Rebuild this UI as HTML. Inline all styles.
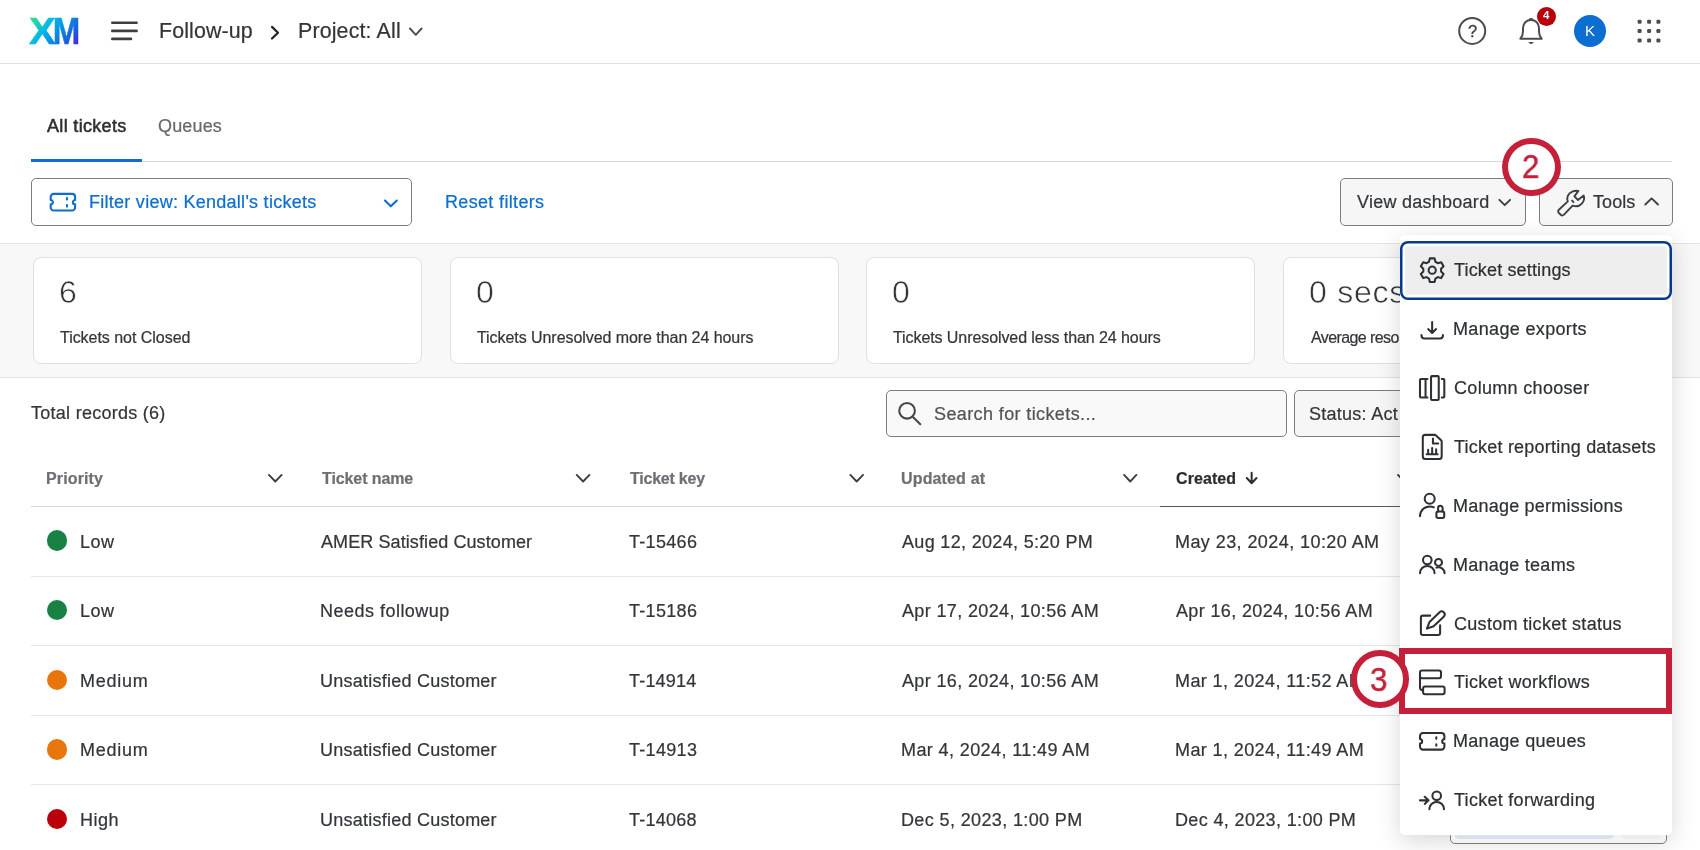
<!DOCTYPE html>
<html lang="en">
<head>
<meta charset="utf-8">
<title>Follow-up</title>
<style>
*{box-sizing:border-box;margin:0;padding:0}
html,body{width:1700px;height:850px;overflow:hidden;background:#fff}
body{position:relative;font-family:"Liberation Sans",sans-serif;color:#32363a}
.a{position:absolute;white-space:nowrap}
.t{position:absolute;white-space:nowrap;line-height:1;transform:translateY(-50%);will-change:transform;-webkit-text-stroke:.22px}
svg{position:absolute;overflow:visible}
#hdr{left:0;top:0;width:1700px;height:64px;border-bottom:1px solid #e4e4e4;background:#fff}
#tabline{left:31px;top:161px;width:1641px;height:1px;background:#dadada}
#tabsel{left:31px;top:159px;width:111px;height:3px;background:#0b6ed0}
.btn{border:1px solid #7d7d7d;border-radius:5px;background:#fff}
.btn2{border:1px solid #7d7d7d;border-radius:5px;background:#f6f6f6}
#band{left:0;top:243px;width:1700px;height:135px;background:#f8f8f8;border-top:1px solid #e4e4e4;border-bottom:1px solid #e4e4e4}
.card{background:#fff;border:1px solid #e0e0e0;border-radius:8px;height:107px;top:257px;width:389px}
.rl{left:31px;width:1641px;height:1px;background:#e6e6e6}
.dot{width:20.6px;height:20.6px;border-radius:50%;left:46.700px}
#menu{left:1399.500px;top:235px;width:272.500px;height:600.200px;background:#fff;border-radius:5px;box-shadow:0 6px 24px rgba(0,0,0,.16)}
.ic{fill:none;stroke:#32363a;stroke-width:1.9;stroke-linecap:round;stroke-linejoin:round}
.chev{fill:none;stroke:#4a4e52;stroke-width:1.9;stroke-linecap:round;stroke-linejoin:round}
</style>
</head>
<body>

<!-- header -->
<div class="a" id="hdr"></div>
<svg style="left:0;top:0;will-change:transform" width="100" height="64">
  <defs><linearGradient id="xmg" gradientUnits="userSpaceOnUse" x1="31" y1="15" x2="74" y2="50">
    <stop offset="0" stop-color="#27e389"/><stop offset=".16" stop-color="#1fd6a4"/><stop offset=".36" stop-color="#05b6ea"/><stop offset=".62" stop-color="#0a86e2"/><stop offset=".82" stop-color="#1d58e0"/><stop offset="1" stop-color="#5a1ee6"/>
  </linearGradient></defs>
  <g font-family="Liberation Sans, sans-serif" font-weight="bold" font-size="37.500" fill="url(#xmg)" stroke="url(#xmg)" stroke-width=".5">
    <text x="29.100" y="43.800" textLength="26.650" lengthAdjust="spacingAndGlyphs">X</text>
    <text x="52.800" y="43.800" textLength="27.470" lengthAdjust="spacingAndGlyphs">M</text>
  </g>
</svg>
<svg style="left:111px;top:21px" width="28" height="20" fill="none" stroke="#3c4043" stroke-width="2.6" stroke-linecap="round">
  <path d="M1.3 1.8H25.6M1.3 9.9H25.6M1.3 17.9H20"/>
</svg>
<svg style="left:269px;top:24px" width="12" height="18" fill="none" stroke="#1f2326" stroke-width="2.2" stroke-linecap="round" stroke-linejoin="round"><path d="M3 2.9L9 8.700L3 14.500"/></svg>
<svg class="chev" style="left:409px;top:26px" width="16" height="12"><path d="M1 2.500L6.800 8.800L12.600 2.500"/></svg>

<svg style="left:1456px;top:15px" width="32" height="32" fill="none" stroke="#494d51" stroke-width="2">
  <circle cx="16.200" cy="15.900" r="13"/>
</svg>
<div class="t" style="left:1468.100px;top:31.200px;font-size:16.500px;color:#3c4044;-webkit-text-stroke:.3px #3c4044">?</div>
<svg style="left:1516px;top:15px" width="30" height="32" fill="none" stroke="#494d51" stroke-width="2" stroke-linecap="round" stroke-linejoin="round">
  <path d="M4.300 23.800C6.200 21.500 7 19.500 7 16.500V13C7 8.200 10.400 5 15 5C19.600 5 23 8.200 23 13V16.500C23 19.500 23.800 21.500 25.700 23.800Z"/>
  <path d="M13.500 4.500C13.800 3.400 16.200 3.400 16.500 4.500" stroke-width="1.600"/>
  <path d="M12.400 27.100H17.700C17.200 29.500 12.900 29.500 12.400 27.100Z" fill="#494d51" stroke="none"/>
</svg>
<div class="a" style="left:1536.600px;top:6.700px;width:19px;height:19px;border-radius:50%;background:#b8000b"></div>
<div class="t" style="left:1542.700px;top:16.300px;font-size:11.500px;font-weight:bold;color:#fff;-webkit-text-stroke:0">4</div>
<div class="a" style="left:1574px;top:14.800px;width:32px;height:32px;border-radius:50%;background:#0b6ed0"></div>
<div class="t" style="left:1585px;top:30.300px;font-size:15px;color:#fff;-webkit-text-stroke:0">K</div>
<svg style="left:1636px;top:18px" width="26" height="26" fill="#494d51">
  <rect x="1.600" y="1.700" width="4" height="4" rx="1.200"/><rect x="11.100" y="1.700" width="4" height="4" rx="1.200"/><rect x="20.400" y="1.700" width="4" height="4" rx="1.200"/>
  <rect x="1.600" y="11" width="4" height="4" rx="1.200"/><rect x="11.100" y="11" width="4" height="4" rx="1.200"/><rect x="20.400" y="11" width="4" height="4" rx="1.200"/>
  <rect x="1.600" y="20.400" width="4" height="4" rx="1.200"/><rect x="11.100" y="20.400" width="4" height="4" rx="1.200"/><rect x="20.400" y="20.400" width="4" height="4" rx="1.200"/>
</svg>

<!-- tabs -->
<div class="a" id="tabline"></div>
<div class="a" id="tabsel"></div>

<!-- toolbar -->
<div class="a btn" style="left:31px;top:178px;width:381px;height:48px"></div>
<div class="a btn2" style="left:1340px;top:178px;width:185.500px;height:48px"></div>
<div class="a btn2" style="left:1539px;top:178px;width:133.500px;height:48px"></div>

<!-- band -->
<div class="a" id="band"></div>
<div class="a card" style="left:33px"></div>
<div class="a card" style="left:449.500px"></div>
<div class="a card" style="left:866px"></div>
<div class="a card" style="left:1282.500px"></div>

<!-- table toolbar -->
<div class="a btn" style="left:885.500px;top:390px;width:401px;height:47px;background:#f9f9f9"></div>
<div class="a btn2" style="left:1294px;top:390px;width:200px;height:47px"></div>

<!-- table lines -->
<div class="a rl" style="top:506px;background:#d6d6d6"></div>
<div class="a" style="left:1160px;top:506px;width:274px;height:1px;background:#55595d"></div>
<div class="a rl" style="top:576px"></div>
<div class="a rl" style="top:645px"></div>
<div class="a rl" style="top:715px"></div>
<div class="a rl" style="top:784px"></div>
<div class="a dot" style="top:530.400px;background:#178244"></div>
<div class="a dot" style="top:599.900px;background:#178244"></div>
<div class="a dot" style="top:669.700px;background:#e8760c"></div>
<div class="a dot" style="top:739.200px;background:#e8760c"></div>
<div class="a dot" style="top:808.700px;background:#bb000b"></div>


<!-- page icons -->
<svg style="left:0;top:0" width="1700" height="850" viewBox="0 0 1700 850" fill="none" stroke-linecap="round" stroke-linejoin="round">
  <g stroke="#0b6ed0" stroke-width="2.1">
    <path transform="translate(50.700 193.900)" d="M3 0H21.400a3 3 0 0 1 3 3V6.100a2.200 2.200 0 0 0 0 4.400V13.600a3 3 0 0 1 -3 3H3a3 3 0 0 1 -3 -3V10.500a2.200 2.200 0 0 0 0 -4.400V3a3 3 0 0 1 3 -3ZM16.300 4.200V5.700M16.300 11.200V12.700"/>
    <path d="M384.900 200.500L390.850 206.300L396.800 200.500"/>
  </g>
  <g stroke="#3c4044" stroke-width="1.9">
    <path d="M1499.400 199.800L1504.750 205.200L1510.100 199.800"/>
    <path d="M1645.300 204.500L1651.650 198.400L1658 204.500"/>
    <path d="M1578.400 190.900C1574.500 190.200 1569.500 191.800 1567.800 195.800C1567 197.800 1567.100 199.600 1567.800 201.400L1558.900 209.700C1557.900 210.700 1557.900 212 1558.900 213L1560.700 214.700C1561.700 215.600 1563 215.600 1564 214.600L1572.600 205.600C1575.500 206.700 1579.500 206.200 1581.800 203.600C1583.900 201.300 1584.600 198.400 1583.700 195.600L1578 200L1574.400 196.400Z"/>
    <path d="M1572.100 200.600L1573.500 202.100"/>
    <path d="M268.950 474.900L275.300 481.500L281.650 474.900M576.750 474.900L583.100 481.500L589.450 474.900M850.350 474.900L856.700 481.500L863.050 474.900M1124.100 474.900L1130.250 481.500L1136.400 474.900M1398 474.900L1404.300 481.500L1410.600 474.900"/>
  </g>
  <g stroke="#44484c" stroke-width="2.050">
    <circle cx="907.050" cy="410.750" r="7.850"/>
    <path d="M912.900 417L920.300 424.200"/>
  </g>
  <g stroke="#2a2e32" stroke-width="2">
    <path d="M1251.650 472.800V483.200M1246.800 478L1251.650 483.200L1256.500 478"/>
  </g>
</svg>
<div class="t" id="h1" style="left:158.70px;top:31.60px;font-size:21.4px;letter-spacing:0.113px">Follow-up</div>
<div class="t" id="h2" style="left:298.00px;top:31.60px;font-size:21.4px;letter-spacing:0.146px">Project: All</div>
<div class="t" id="tab1" style="left:46.77px;top:125.60px;font-size:18px;color:#2d3135;-webkit-text-stroke:0.55px #2d3135;letter-spacing:0.327px">All tickets</div>
<div class="t" id="tab2" style="left:158.22px;top:125.60px;font-size:18px;color:#65696d;letter-spacing:0.153px">Queues</div>
<div class="t" id="fv" style="left:89.30px;top:201.60px;font-size:18px;color:#0b6ed0;letter-spacing:0.266px">Filter view: Kendall's tickets</div>
<div class="t" id="rf" style="left:445.39px;top:201.60px;font-size:18px;color:#0b6ed0;letter-spacing:0.337px">Reset filters</div>
<div class="t" id="vd" style="left:1356.73px;top:201.70px;font-size:18px;letter-spacing:0.260px">View dashboard</div>
<div class="t" id="tl" style="left:1593.42px;top:201.70px;font-size:18px;letter-spacing:0.069px">Tools</div>
<div class="t" id="n1" style="left:58.69px;top:292.30px;font-size:32px;-webkit-text-stroke:.55px #fff">6</div>
<div class="t" id="l1" style="left:60.38px;top:338.10px;font-size:16px;letter-spacing:-0.037px">Tickets not Closed</div>
<div class="t" id="n2" style="left:475.67px;top:292.30px;font-size:32px;-webkit-text-stroke:.55px #fff">0</div>
<div class="t" id="l2" style="left:477.09px;top:338.10px;font-size:16px;letter-spacing:-0.061px">Tickets Unresolved more than 24 hours</div>
<div class="t" id="n3" style="left:892.47px;top:292.30px;font-size:32px;-webkit-text-stroke:.55px #fff">0</div>
<div class="t" id="l3" style="left:893.13px;top:338.10px;font-size:16px;letter-spacing:-0.082px">Tickets Unresolved less than 24 hours</div>
<div class="t" id="n4" style="left:1309.32px;top:292.30px;font-size:32px;-webkit-text-stroke:.55px #fff;letter-spacing:0.768px">0 secs</div>
<div class="t" id="l4" style="left:1310.74px;top:338.10px;font-size:16px;letter-spacing:-0.589px">Average reso<span style="margin-left:5px">lution time</span></div>
<div class="t" id="tr" style="left:31.42px;top:413.00px;font-size:18px;letter-spacing:0.268px">Total records (6)</div>
<div class="t" id="sr" style="left:934.10px;top:413.70px;font-size:18px;color:#505458;letter-spacing:0.387px">Search for tickets...</div>
<div class="t" id="st" style="left:1309.45px;top:413.70px;font-size:18px;letter-spacing:0.261px">Status: Act<span style="margin-left:5px">ive</span></div>
<div class="t" id="c1" style="left:46.27px;top:478.50px;font-size:16px;font-weight:bold;color:#6c7074;letter-spacing:0.127px">Priority</div>
<div class="t" id="c2" style="left:321.53px;top:478.50px;font-size:16px;font-weight:bold;color:#6c7074;letter-spacing:-0.096px">Ticket name</div>
<div class="t" id="c3" style="left:629.53px;top:478.50px;font-size:16px;font-weight:bold;color:#6c7074;letter-spacing:-0.218px">Ticket key</div>
<div class="t" id="c4" style="left:901.20px;top:478.50px;font-size:16px;font-weight:bold;color:#6c7074;letter-spacing:0.149px">Updated at</div>
<div class="t" id="c5" style="left:1176.07px;top:478.50px;font-size:16px;font-weight:bold;color:#2a2e32;letter-spacing:0.090px">Created</div>
<div class="t" id="p0" style="left:79.95px;top:542.30px;font-size:18px;letter-spacing:0.545px">Low</div>
<div class="t" id="n_0" style="left:320.64px;top:542.30px;font-size:18px;letter-spacing:0.092px">AMER Satisfied Customer</div>
<div class="t" id="k0" style="left:628.53px;top:542.30px;font-size:18px;letter-spacing:0.309px">T-15466</div>
<div class="t" id="u0" style="left:901.84px;top:542.30px;font-size:18px;letter-spacing:0.329px">Aug 12, 2024, 5:20 PM</div>
<div class="t" id="cr0" style="left:1174.95px;top:542.30px;font-size:18px;letter-spacing:0.426px">May 23, 2024, 10:20 AM</div>
<div class="t" id="p1" style="left:79.95px;top:611.30px;font-size:18px;letter-spacing:0.545px">Low</div>
<div class="t" id="n_1" style="left:319.90px;top:611.30px;font-size:18px;letter-spacing:0.483px">Needs followup</div>
<div class="t" id="k1" style="left:628.53px;top:611.30px;font-size:18px;letter-spacing:0.309px">T-15186</div>
<div class="t" id="u1" style="left:901.84px;top:611.30px;font-size:18px;letter-spacing:0.360px">Apr 17, 2024, 10:56 AM</div>
<div class="t" id="cr1" style="left:1175.64px;top:611.30px;font-size:18px;letter-spacing:0.357px">Apr 16, 2024, 10:56 AM</div>
<div class="t" id="p2" style="left:79.95px;top:680.50px;font-size:18px;letter-spacing:0.731px">Medium</div>
<div class="t" id="n_2" style="left:320.38px;top:680.50px;font-size:18px;letter-spacing:0.239px">Unsatisfied Customer</div>
<div class="t" id="k2" style="left:628.53px;top:680.50px;font-size:18px;letter-spacing:0.205px">T-14914</div>
<div class="t" id="u2" style="left:901.84px;top:680.50px;font-size:18px;letter-spacing:0.360px">Apr 16, 2024, 10:56 AM</div>
<div class="t" id="cr2" style="left:1175.19px;top:680.50px;font-size:18px;letter-spacing:0.394px">Mar 1, 2024, 11:52 AM</div>
<div class="t" id="p3" style="left:79.95px;top:750.00px;font-size:18px;letter-spacing:0.731px">Medium</div>
<div class="t" id="n_3" style="left:320.38px;top:750.00px;font-size:18px;letter-spacing:0.239px">Unsatisfied Customer</div>
<div class="t" id="k3" style="left:628.53px;top:750.00px;font-size:18px;letter-spacing:0.310px">T-14913</div>
<div class="t" id="u3" style="left:901.39px;top:750.00px;font-size:18px;letter-spacing:0.396px">Mar 4, 2024, 11:49 AM</div>
<div class="t" id="cr3" style="left:1175.19px;top:750.00px;font-size:18px;letter-spacing:0.394px">Mar 1, 2024, 11:49 AM</div>
<div class="t" id="p4" style="left:79.95px;top:819.50px;font-size:18px;letter-spacing:0.522px">High</div>
<div class="t" id="n_4" style="left:320.38px;top:819.50px;font-size:18px;letter-spacing:0.239px">Unsatisfied Customer</div>
<div class="t" id="k4" style="left:628.53px;top:819.50px;font-size:18px;letter-spacing:0.260px">T-14068</div>
<div class="t" id="u4" style="left:901.39px;top:819.50px;font-size:18px;letter-spacing:0.374px">Dec 5, 2023, 1:00 PM</div>
<div class="t" id="cr4" style="left:1175.19px;top:819.50px;font-size:18px;letter-spacing:0.356px">Dec 4, 2023, 1:00 PM</div>

<!-- tools menu -->
<div class="a" id="menu"></div>
<div class="a" style="left:1400px;top:241px;width:271.800px;height:58.700px;border-radius:8px;background:#eee;box-shadow:inset 0 0 0 2.500px #063a8c,inset 0 0 0 5.200px #fff"></div>


<!-- menu icons -->
<svg style="left:0;top:0" width="1700" height="850" viewBox="0 0 1700 850" fill="none" stroke="#2d3135" stroke-width="2.050" stroke-linecap="round" stroke-linejoin="round">
  <path d="M1428.97 261.75 L1429.81 258.39 L1434.59 258.39 L1435.43 261.75 L1437.86 263.16 L1441.19 262.20 L1443.58 266.34 L1441.09 268.74 L1441.09 271.56 L1443.58 273.96 L1441.19 278.10 L1437.86 277.14 L1435.43 278.55 L1434.59 281.91 L1429.81 281.91 L1428.97 278.55 L1426.54 277.14 L1423.21 278.10 L1420.82 273.96 L1423.31 271.56 L1423.31 268.74 L1420.82 266.34 L1423.21 262.20 L1426.54 263.16Z"/>
  <circle cx="1432.200" cy="270.150" r="3.600"/>
  <path d="M1432.150 322V332.600M1428.200 329.100L1432.150 332.900L1436.100 329.100M1421.450 335V335.500a3 3 0 0 0 3 3H1439.950a3 3 0 0 0 3 -3V335"/>
  <path d="M1427.500 378.900H1420.900a.9 .9 0 0 0 -.9 .9V396.500a.9 .9 0 0 0 .9 .9H1427.500M1425.550 378.900V397.400M1441.800 378.900H1443.400a.9 .9 0 0 1 .9 .9V396.500a.9 .9 0 0 1 -.9 .9H1441.800"/>
  <rect x="1431.050" y="376.100" width="7.700" height="23.800" rx=".9"/>
  <path d="M1425.300 434.850H1434.600a2 2 0 0 1 1.400 .6L1441.100 440.300a2 2 0 0 1 .6 1.400V456.400a2.500 2.500 0 0 1 -2.500 2.500H1425.300a2.500 2.500 0 0 1 -2.500 -2.500V437.350a2.500 2.500 0 0 1 2.500 -2.500ZM1432.950 438.500V443.500H1438.200M1426.600 454.300H1437.600M1428.150 454.300V449.800M1432.150 454.300V448M1436.150 454.300V449.200"/>
  <circle cx="1429.700" cy="498.800" r="5"/>
  <path d="M1420 516.200C1420 510.700 1424.300 506.400 1429.700 506.400C1431.200 506.400 1432.600 506.700 1433.800 507.300"/>
  <rect x="1436.400" y="511.500" width="7.800" height="6.400" rx="1.700"/>
  <path d="M1438.100 511.500V508.100a2.260 2.260 0 0 1 4.520 0V511.500"/>
  <circle cx="1427.300" cy="559.950" r="4.300"/>
  <path d="M1420 573.200a7.280 7.280 0 0 1 14.560 0"/>
  <circle cx="1438.500" cy="562.400" r="3.500"/>
  <path d="M1436.400 567.600A6.100 6.100 0 0 1 1444.600 573.300"/>
  <path d="M1430.200 615.600H1422.900a2 2 0 0 0 -2 2V632.900a2 2 0 0 0 2 2H1438.100a2 2 0 0 0 2 -2V625.300"/>
  <path d="M1426.950 628.650L1429.500 621.900L1439.600 612.200A3.050 3.050 0 0 1 1444 616.400L1433.600 626.300Z"/>
  <rect x="1420" y="670.450" width="21" height="7.800" rx="2"/>
  <path d="M1420 676V687.700a2.500 2.500 0 0 0 2.500 2.500"/>
  <rect x="1423.100" y="686.500" width="21.500" height="7.750" rx="2"/>
  <path transform="translate(1420 733)" d="M3 0H21.400a3 3 0 0 1 3 3V6.100a2.200 2.200 0 0 0 0 4.400V13.600a3 3 0 0 1 -3 3H3a3 3 0 0 1 -3 -3V10.500a2.200 2.200 0 0 0 0 -4.400V3a3 3 0 0 1 3 -3ZM16.300 4.200V5.700M16.300 11.200V12.700"/>
  <path d="M1419.900 800.350H1428.300M1424.700 796.800L1428.500 800.350L1424.700 803.900"/>
  <circle cx="1436.700" cy="795.850" r="4.300"/>
  <path d="M1429.400 809.200a7.300 7.300 0 0 1 14.600 0"/>
</svg>
<div class="t" id="m0" style="left:1454.16px;top:270.30px;font-size:18px;color:#2d3135;letter-spacing:0.159px">Ticket settings</div>
<div class="t" id="m1" style="left:1452.75px;top:329.40px;font-size:18px;color:#2d3135;letter-spacing:0.343px">Manage exports</div>
<div class="t" id="m2" style="left:1453.60px;top:387.60px;font-size:18px;color:#2d3135;letter-spacing:0.317px">Column chooser</div>
<div class="t" id="m3" style="left:1454.16px;top:446.50px;font-size:18px;color:#2d3135;letter-spacing:0.221px">Ticket reporting datasets</div>
<div class="t" id="m4" style="left:1452.75px;top:506.40px;font-size:18px;color:#2d3135;letter-spacing:0.220px">Manage permissions</div>
<div class="t" id="m5" style="left:1452.75px;top:564.60px;font-size:18px;color:#2d3135;letter-spacing:0.256px">Manage teams</div>
<div class="t" id="m6" style="left:1453.60px;top:623.70px;font-size:18px;color:#2d3135;letter-spacing:0.289px">Custom ticket status</div>
<div class="t" id="m7" style="left:1454.16px;top:682.40px;font-size:18px;color:#2d3135;letter-spacing:0.301px">Ticket workflows</div>
<div class="t" id="m8" style="left:1452.75px;top:741.00px;font-size:18px;color:#2d3135;letter-spacing:0.299px">Manage queues</div>
<div class="t" id="m9" style="left:1454.16px;top:799.60px;font-size:18px;color:#2d3135;letter-spacing:0.285px">Ticket forwarding</div>

<!-- peeking widget below menu -->
<div class="a" style="left:1450px;top:800px;width:217px;height:44px;border:1px solid #787878;border-radius:5px;background:#f3f3f3;clip-path:inset(35.200px 0 0 0)"></div>
<div class="a" style="left:1453.500px;top:806px;width:161px;height:33px;border-radius:6px;background:#d6e1eb;clip-path:inset(29.200px 0 0 0)"></div>
<div class="a" style="left:1621px;top:806px;width:42px;height:33px;border-radius:6px;background:#ececec;clip-path:inset(29.200px 0 0 0)"></div>

<!-- annotations -->
<div class="a" style="left:1399.300px;top:648px;width:272.700px;height:66px;border:6px solid #c5203a"></div>
<div class="a" style="left:1351.300px;top:650.200px;width:57.700px;height:57.700px;border-radius:50%;border:6px solid #c5203a;background:#fff"></div>
<div class="t" style="left:1370.300px;top:678.600px;font-size:34px;color:#c5203a;-webkit-text-stroke:.45px #c5203a;transform:translateY(-50%) scaleX(.92);transform-origin:left center">3</div>
<div class="a" style="left:1502.300px;top:138px;width:58.300px;height:58px;border-radius:50%;border:6px solid #c5203a;background:#fff"></div>
<div class="t" style="left:1522.300px;top:166.200px;font-size:34px;color:#c5203a;-webkit-text-stroke:.45px #c5203a;transform:translateY(-50%) scaleX(.92);transform-origin:left center">2</div>

</body>
</html>
